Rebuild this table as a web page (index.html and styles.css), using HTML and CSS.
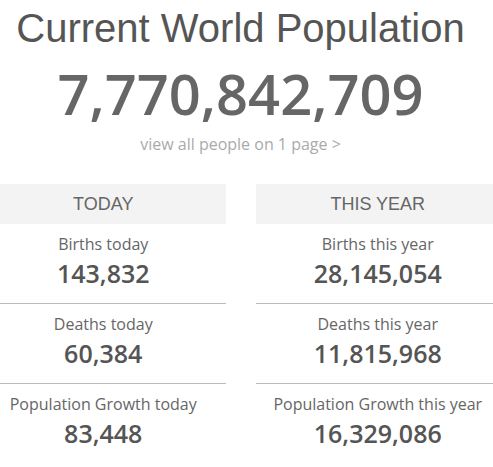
FILE: index.html
```html
<!DOCTYPE html>
<html>
<head>
<meta charset="utf-8">
<link rel="stylesheet" href="styles.css">
</head>
<body>
<div class="page">
  <h1 class="title">Current World Population</h1>
  <div class="counter">7,770,842,709</div>
  <a class="link">view all people on 1 page &gt;</a>
  <div class="cols">
    <div class="col">
      <div class="head">TODAY</div>
      <div class="row">
        <div class="label">Births today</div>
        <div class="num">143,832</div>
      </div>
      <div class="row">
        <div class="label">Deaths today</div>
        <div class="num">60,384</div>
      </div>
      <div class="row">
        <div class="label">Population Growth today</div>
        <div class="num">83,448</div>
      </div>
    </div>
    <div class="col">
      <div class="head">THIS YEAR</div>
      <div class="row">
        <div class="label">Births this year</div>
        <div class="num">28,145,054</div>
      </div>
      <div class="row">
        <div class="label">Deaths this year</div>
        <div class="num">11,815,968</div>
      </div>
      <div class="row">
        <div class="label">Population Growth this year</div>
        <div class="num">16,329,086</div>
      </div>
    </div>
  </div>
</div>
</body>
</html>
```
FILE: styles.css
```css
html, body {
  margin: 0;
  padding: 0;
  background: #fff;
  overflow: hidden;
}
.page {
  width: 519px;
  margin-left: -19px;
  font-family: "Open Sans", sans-serif;
  text-align: center;
}
.title {
  margin: 0;
  padding-top: 6px;
  font-family: "Liberation Sans", Arial, sans-serif;
  font-weight: 400;
  font-size: 40px;
  line-height: 44px;
  color: #555;
}
.counter {
  margin-top: 10px;
  font-size: 56px;
  font-weight: 600;
  line-height: 66px;
  color: #666;
}
.link {
  display: block;
  margin-top: 8px;
  font-size: 16px;
  line-height: 20px;
  color: #aaa;
}
.cols {
  margin-top: 30px;
  display: grid;
  grid-template-columns: 1fr 1fr;
  column-gap: 30px;
}
.head {
  height: 40px;
  line-height: 40px;
  background: #f3f3f3;
  font-family: "Liberation Sans", Arial, sans-serif;
  font-size: 18px;
  color: #666;
}
.row {
  height: 80px;
  box-sizing: border-box;
  padding-top: 9px;
  border-bottom: 1px solid #bbb;
}
.row:last-child {
  border-bottom: none;
}
.label {
  font-size: 16px;
  line-height: 22px;
  color: #666;
}
.num {
  font-size: 25px;
  font-weight: 600;
  line-height: 36px;
  color: #555;
}
```
